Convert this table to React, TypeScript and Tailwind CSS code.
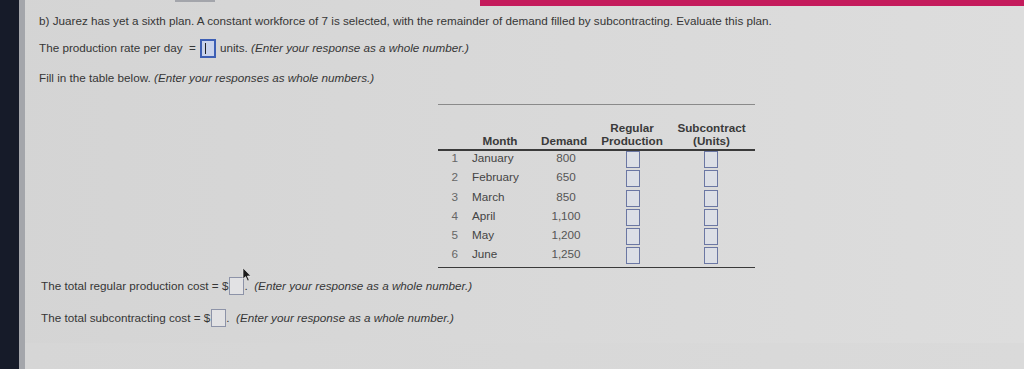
import React from "react";

const rows = [
  { n: 1, month: "January", demand: "800" },
  { n: 2, month: "February", demand: "650" },
  { n: 3, month: "March", demand: "850" },
  { n: 4, month: "April", demand: "1,100" },
  { n: 5, month: "May", demand: "1,200" },
  { n: 6, month: "June", demand: "1,250" },
];

function Box({ className = "" }: { className?: string }) {
  return <span className={`inline-block h-[17px] w-[14px] border border-[#6b77a3] bg-[#dcdfe6] ${className}`} />;
}

function Pointer() {
  return (
    <svg width="10" height="15" viewBox="0 0 10 15" className="absolute left-[203px] top-[-9px]">
      <path d="M1 1 L1 12 L3.6 9.6 L5.6 14 L7.2 13.3 L5.3 9 L8.8 9 Z" fill="#1a1a1a" stroke="#f2f2f2" strokeWidth="0.6" />
    </svg>
  );
}

export default function App() {
  return (
    <div className="flex h-[369px] w-[1024px] overflow-hidden bg-gradient-to-r from-[#d4d4d4] to-[#dddddd] font-['Liberation_Sans',Arial,sans-serif] text-[11.7px] text-[#363636]">
      {/* monitor bezel */}
      <div className="w-[19px] shrink-0 bg-[#161b29]" />
      <div className="w-[6px] shrink-0 bg-[#a4a6ab]" />

      <div className="flex flex-1 flex-col">
        {/* top accent bar */}
        <div className="flex h-[13px] items-start">
          <div className="ml-[150px] h-[2px] w-[40px] bg-[#a3a5ab]" />
          <div className="ml-[265px] h-[6px] flex-1 bg-[#c41b5c]" />
        </div>

        <div className="flex flex-1 flex-col pl-[14px]">
          <p className="h-[16px] leading-[16px]">
            b) Juarez has yet a sixth plan. A constant workforce of 7 is selected, with the remainder of demand filled by subcontracting. Evaluate this plan.
          </p>

          <div className="mt-[9px] flex h-[20px] items-center">
            <span>The production rate per day&nbsp;&nbsp;=</span>
            <span className="relative mx-[4px] inline-block h-[19px] w-[16px] border-2 border-[#3d5fb5] bg-[#c9d3ec]">
              <span className="absolute left-[3px] top-[2px] h-[11px] w-[1px] bg-[#222]" />
            </span>
            <span>units.&nbsp;</span>
            <i>(Enter your response as a whole number.)</i>
          </div>

          <p className="mt-[12px] h-[16px] leading-[16px]">
            Fill in the table below. <i>(Enter your responses as whole numbers.)</i>
          </p>

          {/* table */}
          <div className="ml-[399px] mt-[18px] w-[317px] border-t border-[#8a8a8a]">
            <div className="grid h-[46px] grid-cols-[24px_70px_64px_72px_87px] items-end border-b-2 border-[#3a3a3a] pb-[2px] text-center font-bold leading-[13px] text-[#3a3a3a]">
              <span />
              <span className="pl-[6px]">Month</span>
              <span>Demand</span>
              <span>Regular<br />Production</span>
              <span>Subcontract<br />(Units)</span>
            </div>
            <div className="border-b border-[#3a3a3a]">
              {rows.map((r) => (
                <div key={r.n} className="grid h-[19.3px] grid-cols-[24px_70px_64px_72px_87px] items-start leading-[14px]">
                  <span className="pr-[4px] text-right text-[#666]">{r.n}</span>
                  <span className="pl-[10px] text-[#444]">{r.month}</span>
                  <span className="pl-[4px] text-center text-[#555]">{r.demand}</span>
                  <span className="flex justify-center pl-[2px]">
                    <Box />
                  </span>
                  <span className="flex justify-center pr-[2px]">
                    <Box />
                  </span>
                </div>
              ))}
            </div>
          </div>

          <div className="relative mt-[8px] flex h-[20px] items-center pl-[2px]">
            <span>The total regular production cost = $</span>
            <Box className="ml-[1px] h-[18px] w-[15px] border-[#8d93a8] bg-[#e2e2e4]" />
            <span>.&nbsp;&nbsp;</span>
            <i>(Enter your response as a whole number.)</i>
            <Pointer />
          </div>

          <div className="mt-[12px] flex h-[20px] items-center pl-[2px]">
            <span>The total subcontracting cost = $</span>
            <Box className="ml-[1px] h-[18px] w-[15px] border-[#8d93a8] bg-[#e2e2e4]" />
            <span>.&nbsp;&nbsp;</span>
            <i>(Enter your response as a whole number.)</i>
          </div>

          <div className="mt-auto -ml-[14px] h-[26px] bg-gradient-to-r from-[#d6d6d6] to-[#dadada]" />
        </div>
      </div>
    </div>
  );
}
